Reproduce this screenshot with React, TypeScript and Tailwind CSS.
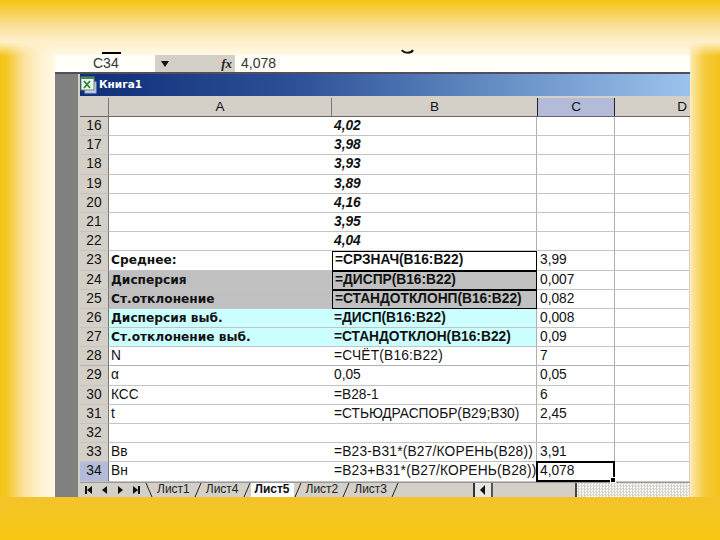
const cellFont = "font-['Liberation_Sans',Arial,sans-serif]";

type Row = {
  n: number;
  a?: string;
  b?: string;
  c?: string;
  tint?: 'gray' | 'cyan';
  boldA?: boolean;
  boldB?: boolean;
  italicB?: boolean;
  boxB?: boolean;
  wide?: boolean;
  thick?: boolean;
};

const rows: Row[] = [
  { n: 16, b: '4,02', boldB: true, italicB: true },
  { n: 17, b: '3,98', boldB: true, italicB: true },
  { n: 18, b: '3,93', boldB: true, italicB: true },
  { n: 19, b: '3,89', boldB: true, italicB: true },
  { n: 20, b: '4,16', boldB: true, italicB: true },
  { n: 21, b: '3,95', boldB: true, italicB: true },
  { n: 22, b: '4,04', boldB: true, italicB: true },
  { n: 23, a: 'Среднее:', b: '=СРЗНАЧ(B16:B22)', c: '3,99', boldA: true, boldB: true, boxB: true },
  { n: 24, a: 'Дисперсия', b: '=ДИСПР(B16:B22)', c: '0,007', tint: 'gray', boldA: true, boldB: true, boxB: true },
  { n: 25, a: 'Ст.отклонение', b: '=СТАНДОТКЛОНП(B16:B22)', c: '0,082', tint: 'gray', boldA: true, boldB: true, boxB: true },
  { n: 26, a: 'Дисперсия выб.', b: '=ДИСП(B16:B22)', c: '0,008', tint: 'cyan', boldA: true, boldB: true },
  { n: 27, a: 'Ст.отклонение выб.', b: '=СТАНДОТКЛОН(B16:B22)', c: '0,09', tint: 'cyan', boldA: true, boldB: true },
  { n: 28, a: 'N', b: '=СЧЁТ(B16:B22)', c: '7', thick: true, wide: true },
  { n: 29, a: 'α', b: '0,05', c: '0,05' },
  { n: 30, a: 'КСС', b: '=B28-1', c: '6' },
  { n: 31, a: 't', b: '=СТЬЮДРАСПОБР(B29;B30)', c: '2,45' },
  { n: 32 },
  { n: 33, a: 'Вв', b: '=B23-B31*(B27/КОРЕНЬ(B28))', c: '3,91', wide: true },
  { n: 34, a: 'Вн', b: '=B23+B31*(B27/КОРЕНЬ(B28))', c: '4,078', wide: true },
];

const tabs = ['Лист1', 'Лист4', 'Лист5', 'Лист2', 'Лист3'];

function ExcelIcon() {
  return (
    <svg width="17" height="18" viewBox="0 0 17 18" className="shrink-0">
      <rect x="5" y="6" width="11" height="11" fill="#c5d3f0" stroke="#9db0da" />
      <rect x="1" y="1" width="13" height="13" fill="#f4f4ea" stroke="#6f8a68" />
      <rect x="1" y="1" width="13" height="2" fill="#3f8f4f" />
      <path d="M4 5l6 7M10 5l-6 7" stroke="#1f8a3c" strokeWidth="1.8" />
    </svg>
  );
}

function TabSlant({ flip }: { flip?: boolean }) {
  return (
    <svg width="8" height="16" viewBox="0 0 8 16" className="shrink-0">
      <path d={flip ? 'M1 15L7 1' : 'M1 1L7 15'} stroke="#222" strokeWidth="1" fill="none" />
    </svg>
  );
}

function NavArrow({ d }: { d: string }) {
  return (
    <svg width="12" height="12" viewBox="0 0 12 12" className="shrink-0">
      <path d={d} fill="#111" />
    </svg>
  );
}

function SheetRow({ row }: { row: Row }) {
  const tint = row.tint === 'gray' ? 'bg-[#c0c0c0]' : row.tint === 'cyan' ? 'bg-[#ccffff]' : 'bg-white';
  const line = row.thick ? 'border-b-2 border-b-[#b4b4b4]' : 'border-b border-b-[#c4c4c4]';
  const selected = row.n === 34;
  return (
    <div className="grid h-[19.2px] grid-cols-[29px_223px_205px_78px_74px] text-[13.75px] leading-[18px] text-[#111]">
      <div className={`border-r border-r-[#777] text-center ${line} ${selected ? 'bg-[#b3bbd9]' : 'bg-[#d4d0c8]'}`}>
        {row.n}
      </div>
      <div
        className={`whitespace-nowrap pl-[2px] ${line} ${tint} ${
          row.boldA ? "font-['DejaVu_Sans',sans-serif] text-[12.2px] font-bold" : ''
        }`}
      >
        {row.a}
      </div>
      <div
        className={`whitespace-nowrap pl-[2px] ${tint} ${row.boldB ? 'font-bold' : ''} ${row.italicB ? 'italic' : ''} ${
          row.wide ? 'tracking-[0.2px]' : ''
        } ${row.boxB ? 'border border-black leading-[16px]' : `border-r border-r-[#b0b0b0] ${line}`}`}
      >
        {row.b}
      </div>
      <div className={`relative border-r border-r-[#b0b0b0] bg-white pl-[3px] ${line}`}>
        {row.c}
        {selected && (
          <span className="absolute -left-px -top-px h-[21px] w-[79px] border-2 border-black">
            <span className="absolute -bottom-[3px] -right-[3px] h-[6px] w-[6px] border border-white bg-black" />
          </span>
        )}
      </div>
      <div className={`bg-white ${line}`} />
    </div>
  );
}

export default function App() {
  return (
    <div
      className={`relative flex h-[540px] w-[720px] flex-col overflow-hidden bg-[#fff9e6] bg-[linear-gradient(180deg,#f4c414_0,#f6cd45_10px,#fbe09a_26px,#fff0cc_42px,rgba(255,248,225,0)_56px),linear-gradient(90deg,#f4c414_0,#f5c82d_8px,#fbe3a0_24px,#fff1cf_40px,rgba(255,248,225,0)_56px),linear-gradient(270deg,#f3c31a_0,#f5c93a_15px,#fbe6a0_28px,rgba(255,248,225,0)_32px)] ${cellFont}`}
    >
      <div className="ml-[55px] mt-[55px] flex h-[442px] w-[635px] flex-col overflow-hidden">
        {/* formula bar */}
        <div className="flex h-[17px] shrink-0 bg-[#fffef8] text-[14px] leading-[17px] text-[#333]">
          <div className="w-[100px] pl-[38px]">C34</div>
          <div className="flex w-[80px] items-center justify-between bg-[#d4d0c8] pl-[6px] pr-[3px]">
            <svg width="8" height="6" viewBox="0 0 8 6" className="shrink-0">
              <path d="M0 0h8L4 6z" fill="#111" />
            </svg>
            <span className="font-['Liberation_Serif',serif] text-[13px] font-bold italic text-[#222]">fx</span>
          </div>
          <div className="pl-[6px]">4,078</div>
        </div>

        <div className="flex min-h-0 flex-1 border-t-2 border-t-[#50505c]">
          {/* empty workspace on the left of the book */}
          <div className="w-[23px] shrink-0 bg-[#808080]" />
          <div className="flex min-w-0 flex-1 flex-col border-l-2 border-l-[#d4d0c8] bg-[#d4d0c8]">
            {/* title */}
            <div className="flex h-[22px] shrink-0 items-center gap-[2px] bg-[linear-gradient(90deg,#0f2f78_0,#2c5096_35%,#5f88c0_65%,#9cc3ec_100%)] font-bold text-white">
              <ExcelIcon />
              <span className="font-['DejaVu_Sans',sans-serif] text-[10.5px]">Книга1</span>
            </div>
            {/* column headers */}
            <div className="mt-[2px] grid h-[19px] shrink-0 grid-cols-[29px_223px_205px_78px_74px] border-b border-b-[#666] text-center text-[13.5px] leading-[18px] text-[#111]">
              <div className="border-r border-r-[#777]" />
              <div className="border-r border-r-[#777]">A</div>
              <div>B</div>
              <div className="border-x border-x-[#222] bg-[#b3bbd9]">C</div>
              <div className="pl-[60px]">D</div>
            </div>
            <div className="shrink-0">
              {rows.map((row) => (
                <SheetRow key={row.n} row={row} />
              ))}
            </div>
            {/* sheet tabs and scroller */}
            <div className="flex min-h-0 flex-1 items-center overflow-hidden border-t border-t-[#999] bg-[#d4d0c8] text-[12px] leading-[15px] text-[#222]">
              <div className="flex w-[65px] shrink-0 items-center justify-between px-[3px]">
                <NavArrow d="M2 2h2v8H2zM9 2v8L4 6z" />
                <NavArrow d="M8 2v8L3 6z" />
                <NavArrow d="M4 2v8l5-4z" />
                <NavArrow d="M3 2v8l5-4zM8 2h2v8H8z" />
              </div>
              <TabSlant />
              {tabs.map((tab) => (
                <div key={tab} className="flex shrink-0 items-center">
                  <span
                    className={
                      tab === 'Лист5'
                        ? 'bg-white px-[4px] font-bold text-[#111]'
                        : 'px-[4px]'
                    }
                  >
                    {tab}
                  </span>
                  <TabSlant flip />
                </div>
              ))}
              <div className="h-full flex-1 border-r-2 border-r-[#333]" />
              <div className="flex h-full w-[18px] items-center justify-center border-r-2 border-r-[#555] bg-[#e8e6e0]">
                <svg width="6" height="10" viewBox="0 0 6 10">
                  <path d="M5 0v10L0 5z" fill="#111" />
                </svg>
              </div>
              <div className="h-full w-[84px] border-r-2 border-r-[#444]" />
              <div className="h-full w-[113px] bg-[repeating-conic-gradient(#d4d0c8_0_25%,#ffffff_0_50%)] bg-[length:3px_3px]" />
            </div>
          </div>
        </div>
      </div>
      {/* clipped remains of the slide's heading */}
      <div className="absolute left-[102px] top-[52px] h-[2px] w-[19px] bg-black" />
      <svg className="absolute left-[400px] top-[49px]" width="16" height="6" viewBox="0 0 16 6">
        <path d="M2 1c1 3 9 4 11 0" stroke="#111" strokeWidth="2" fill="none" />
      </svg>
      <div className="h-[43px] shrink-0 bg-[linear-gradient(180deg,#f3c32c_0,#f5c710_100%)]" />
    </div>
  );
}
